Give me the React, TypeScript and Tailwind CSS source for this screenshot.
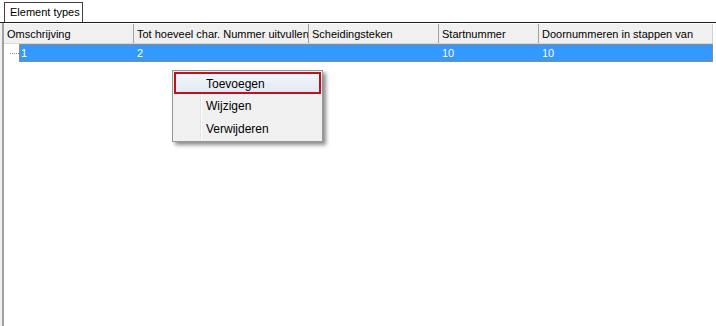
import React from 'react';

const columns = [
  { label: 'Omschrijving', w: 'w-[130px]' },
  { label: 'Tot hoeveel char. Nummer uitvullen', w: 'w-[175px]' },
  { label: 'Scheidingsteken', w: 'w-[130px]' },
  { label: 'Startnummer', w: 'w-[100px]' },
  { label: 'Doornummeren in stappen van', w: 'w-[174px]' },
];

const App = () => {
  return (
    <div
      className="relative w-[716px] h-[326px] bg-white overflow-hidden text-[11px] text-black"
      style={{ fontFamily: '"Liberation Sans", Arial, sans-serif' }}
    >
      {/* Tab strip */}
      <div className="flex h-[23px] items-end pl-[4px] border-b border-[#202020]">
        <div className="h-[20px] w-[79px] border border-b-0 border-[#404040] bg-white flex items-center pl-[5px]">
          Element types
        </div>
      </div>

      {/* Grid */}
      <div className="flex h-[303px]">
        <div className="w-[4px] h-full flex">
          <div className="w-[2px] bg-[#f0f0f0]" />
          <div className="w-[2px] bg-[#a0a0a0]" />
        </div>
        <div className="flex flex-col pt-[1px]">
          {/* Header */}
          <div className="flex h-[20px] bg-[#f0f0f0] border-b border-[#d8d8d8]">
            {columns.map((c, i) => (
              <div
                key={i}
                className={`${c.w} h-full flex items-center pl-[3px] pt-[1px] whitespace-nowrap overflow-hidden ${
                  i < columns.length - 1 ? 'border-r border-[#a0a0a0]' : 'border-r border-[#d0d0d0]'
                }`}
              >
                {c.label}
              </div>
            ))}
          </div>

          {/* Row */}
          <div className="flex h-[18px]">
            <div className="w-[15px] h-full flex items-center">
              <div className="ml-[6px] w-[9px] border-t border-dotted border-[#808080]" />
            </div>
            <div className="flex h-full w-[694px] bg-[#3399ff] text-white border border-dotted border-[#e07b20]">
              <div className="w-[114px] pl-[1px] flex items-center">1</div>
              <div className="w-[175px] pl-[3px] flex items-center">2</div>
              <div className="w-[130px]" />
              <div className="w-[100px] pl-[3px] flex items-center">10</div>
              <div className="w-[170px] pl-[3px] flex items-center">10</div>
            </div>
          </div>
        </div>
      </div>

      {/* Context menu */}
      <div className="absolute left-[172px] top-[70px] w-[151px] h-[72px] bg-[#f0f0f0] border border-[#979797] shadow-[3px_3px_4px_rgba(0,0,0,0.45)] p-[1px] text-[12px]">
        <div className="absolute left-[27px] top-[2px] bottom-[2px] w-[2px] bg-[#e2e3e3] border-r border-white" />
        <div className="relative flex flex-col">
          <div className="h-[22px] flex items-center pl-[30px] pt-[1px] border-2 border-[#c0101e] bg-gradient-to-b from-[#f2f5fa] to-[#e3e9f3]">
            Toevoegen
          </div>
          <div className="h-[22px] flex items-center pl-[32px] pt-[1px]">Wijzigen</div>
          <div className="h-[22px] flex items-center pl-[32px] pt-[3px]">Verwijderen</div>
        </div>
      </div>
    </div>
  );
};

export default App;
